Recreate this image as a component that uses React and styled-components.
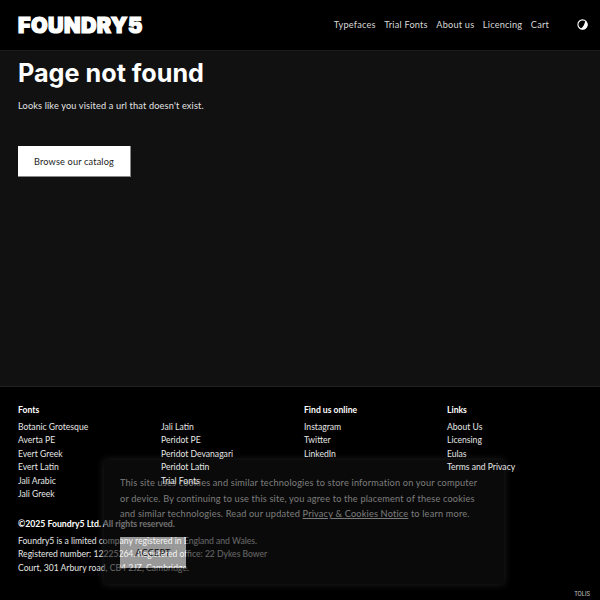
import React from "react";
import styled, { createGlobalStyle } from "styled-components";

const Global = createGlobalStyle`
  html, body { margin: 0; padding: 0; background: #000; }
  body { font-family: "Lato", "Noto Sans", sans-serif; color: #fff; }
  #root { width: 600px; height: 600px; overflow: hidden; }
  * { box-sizing: border-box; }
`;
const Page = styled.div`
  position: relative; width: 600px; height: 600px; display: flex; flex-direction: column; background: #000;
`;
const Header = styled.header`
  height: 51px; flex: none; display: flex; align-items: center; justify-content: space-between;
  padding: 0 12px 1px 18px; border-bottom: 1px solid #1c1c1c; background: #000;
`;
const Logo = styled.div`
  font-family: "Inter", sans-serif; font-weight: 900; font-size: 21.500px; line-height: 20px; color: #fff;
  letter-spacing: 0.4px; -webkit-text-stroke: 1.200px #fff;
`;
const Nav = styled.nav`
  display: flex; align-items: center; font-size: 9.200px; letter-spacing: 0.2px; color: #d8d8d8;
`;
const NavItem = styled.a`
  margin-right: 8.500px; white-space: nowrap;
`;
const ThemeIcon = styled.svg`
  width: 11px; height: 11px; margin-left: 19.500px; display: block;
`;
const Main = styled.main`
  height: 335px; flex: none; background: #111; padding: 6px 18px 0;
`;
const Title = styled.h1`
  margin: 0; font-family: "Inter", sans-serif; font-size: 25.200px; font-weight: 700; line-height: 32px; color: #fff;
`;
const Lead = styled.p`
  margin: 9px 0 0; font-size: 9.200px; line-height: 16px; letter-spacing: 0.15px; color: #e4e4e4;
`;
const CatalogButton = styled.a`
  display: flex; align-items: center; justify-content: center; width: 113px; height: 31px; margin-top: 32px;
  background: #fff; color: #222; font-size: 9.200px; letter-spacing: 0.15px; border: 1px solid #888; border-width: 0 1px 1px 0;
`;
const Footer = styled.footer`
  flex: 1; background: #000; border-top: 1px solid #222; padding: 17px 18px 0; position: relative;
`;
const Columns = styled.div`
  position: relative; z-index: 2; display: grid; grid-template-columns: 143px 143px 143px 143px;
`;
const ColTitle = styled.div`
  font-weight: 700; font-size: 8.600px; line-height: 13px; color: #fff; height: 17px;
`;
const List = styled.div`
  display: flex; flex-direction: column; height: 80px;
`;
const Item = styled.a`
  font-size: 8.600px; line-height: 13.400px; color: #e6e6e6; white-space: nowrap;
`;
const Copy = styled.div`
  font-weight: 700; font-size: 8.700px; line-height: 13px; margin-top: 16px; color: #fff;
`;
const Legal = styled.p`
  margin: 5px 0 0; width: 252px; font-size: 8.600px; line-height: 13.400px; color: #e6e6e6;
`;
const Tag = styled.div`
  position: absolute; right: 10px; bottom: 2px; font-family: "Inter", sans-serif; font-size: 5.500px; line-height: 8px; color: #bbb; font-weight: 500;
`;
const Cookie = styled.div`
  position: absolute; left: 104px; top: 460px; width: 400px; height: 124px; background: #111; opacity: 0.6;
  padding: 15px 16px; box-shadow: 0 0 8px rgba(70,70,70,0.8);
`;
const CookieText = styled.p`
  margin: 0; font-size: 9.200px; line-height: 15.500px; letter-spacing: 0.18px; color: #ccc;
  a { color: inherit; text-decoration: underline; }
`;
const Accept = styled.button`
  display: block; width: 66px; height: 31px; margin-top: 15.500px; background: #fff; color: #222; border: 0; padding: 0;
  font: 9.200px "Lato", sans-serif; letter-spacing: 0.15px;
`;

const col1 = ["Botanic Grotesque", "Averta PE", "Evert Greek", "Evert Latin", "Jali Arabic", "Jali Greek"];
const col2 = ["Jali Latin", "Peridot PE", "Peridot Devanagari", "Peridot Latin", "Trial Fonts"];
const col3 = ["Instagram", "Twitter", "LinkedIn"];
const col4 = ["About Us", "Licensing", "Eulas", "Terms and Privacy"];

export default function App() {
  return (
    <Page>
      <Global />
      <Header>
        <Logo>FOUNDRY5</Logo>
        <Nav>
          {["Typefaces", "Trial Fonts", "About us", "Licencing", "Cart"].map(n => <NavItem key={n}>{n}</NavItem>)}
          <ThemeIcon viewBox="0 0 12 12">
            <circle cx="6" cy="6" r="5" fill="#000" stroke="#fff" strokeWidth="1.2" />
            <path d="M9 1.800A5 5 0 0 1 4 10.600C7 9 8.500 5 9 1.800Z" fill="#fff" />
          </ThemeIcon>
        </Nav>
      </Header>
      <Main>
        <Title>Page not found</Title>
        <Lead>Looks like you visited a url that doesn't exist.</Lead>
        <CatalogButton>Browse our catalog</CatalogButton>
      </Main>
      <Footer>
        <Columns>
          <ColTitle>Fonts</ColTitle>
          <ColTitle />
          <ColTitle>Find us online</ColTitle>
          <ColTitle>Links</ColTitle>
          <List>{col1.map(i => <Item key={i}>{i}</Item>)}</List>
          <List>{col2.map(i => <Item key={i}>{i}</Item>)}</List>
          <List>{col3.map(i => <Item key={i}>{i}</Item>)}</List>
          <List>{col4.map(i => <Item key={i}>{i}</Item>)}</List>
        </Columns>
        <Copy>©2025 Foundry5 Ltd. All rights reserved.</Copy>
        <Legal>Foundry5 is a limited company registered in England and Wales. Registered number: 12225264. Registered office: 22 Dykes Bower Court, 301 Arbury road, CB4 2JZ, Cambridge.</Legal>
        <Tag>TOLIS</Tag>
      </Footer>
      <Cookie>
        <CookieText>This site uses cookies and similar technologies to store information on your computer or device. By continuing to use this site, you agree to the placement of these cookies and similar technologies. Read our updated <a>Privacy &amp; Cookies Notice</a> to learn more.</CookieText>
        <Accept>ACCEPT</Accept>
      </Cookie>
    </Page>
  );
}
